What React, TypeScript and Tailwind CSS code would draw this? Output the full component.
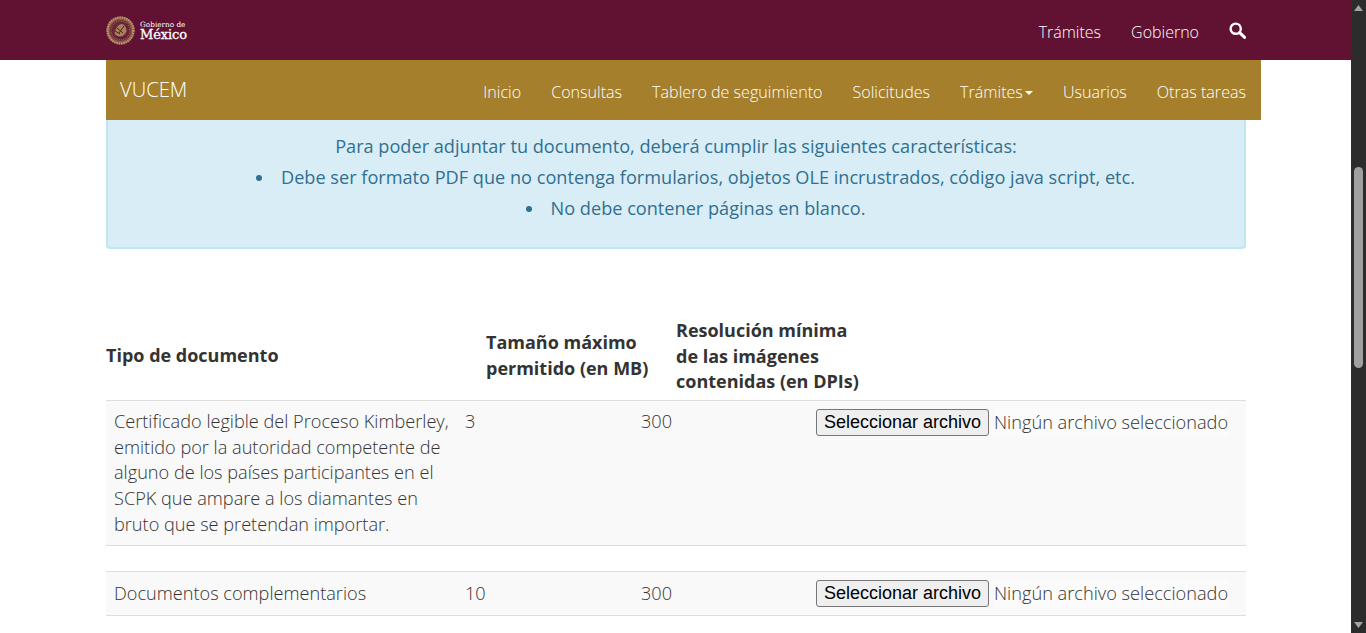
const F = () => (
  <div className="flex items-center self-start min-w-0">
    <button className="w-[173px] h-[27px] shrink-0 bg-[#efefef] border border-[#767676] rounded-[3px] text-[18px] leading-[25px] text-black font-['Liberation_Sans',sans-serif]">Seleccionar archivo</button>
    <span className="ml-[5px] text-[18.2px] leading-[27px] font-light text-[#333] bg-[#fbfbfb] whitespace-nowrap">Ningún archivo seleccionado</span>
  </div>
);

function Logo() {
  return (
    <div className="flex items-center gap-[5px]">
      <svg width="29" height="29" viewBox="0 0 29 29">
        <circle cx="14.5" cy="14.5" r="14" fill="#8a5a48" />
        <circle cx="14.5" cy="14.5" r="13" fill="none" stroke="#c2986a" strokeWidth="2.2" strokeDasharray="1.4 0.9" />
        <circle cx="14.5" cy="14.5" r="10.6" fill="#6a2636" />
        <circle cx="14.5" cy="14.5" r="9.4" fill="none" stroke="#a9825c" strokeWidth="1" strokeDasharray="1 1.2" />
        <path d="M8.500 17c1-5 4-9 7.500-9 2.500.5 4.500 3.500 4.500 7.500-1.500 3-4 5-6.500 5-2.500 0-4.500-1-5.500-3.500z" fill="#a5825a" />
        <path d="M10 20c3 3 7 3 10 0M11 12l6 5M18 10l-5 7M9 15l5 3" stroke="#5d1a2e" strokeWidth="1" fill="none" />
      </svg>
      <div className="flex flex-col text-white font-['DejaVu_Serif',serif] font-normal">
        <span className="text-[7.3px] leading-[9px] mt-[1px] whitespace-nowrap">Gobierno de</span>
        <span className="text-[13px] leading-[12px] tracking-[-0.1px] [-webkit-text-stroke:0.3px_white]">México</span>
      </div>
    </div>
  );
}

const subnav = ["Inicio", "Consultas", "Tablero de seguimiento", "Solicitudes"];

const Bullet = ({ children }: { children: string }) => (
  <li className="flex items-center">
    <span className="w-[6px] h-[6px] mr-[19px] rounded-full bg-[#31708f] shrink-0" />
    {children}
  </li>
);

export default function App() {
  return (
    <div className="h-[633px] overflow-hidden flex bg-white font-['Open_Sans',sans-serif] font-light text-[18.15px] text-[#333]">
      <div className="flex-1 min-w-0 flex flex-col">
        <header className="h-[60px] bg-[#611232] pl-[106px] pr-[105px] flex items-center justify-between shrink-0">
          <Logo />
          <nav className="flex items-center gap-[30px] text-[16px] text-white font-light">
            <span className="mt-[3px]">Trámites</span>
            <span className="mt-[3px]">Gobierno</span>
            <svg width="17" height="17" viewBox="0 0 17 17" fill="none">
              <circle cx="6.7" cy="6.7" r="5.1" stroke="white" strokeWidth="2.4" />
              <path d="M10.6 10.6L15.6 15.4" stroke="white" strokeWidth="3" strokeLinecap="round" />
            </svg>
          </nav>
        </header>
        <div className="mx-[106px] w-[1155px] shrink-0">
          <div className="h-[60px] bg-[#a57f2c] flex items-center justify-between pl-[14px] pr-[15px] text-white">
            <span className="-mt-[2px] text-[20.2px]">VUCEM</span>
            <nav className="flex items-center gap-[30px] text-[16.1px] font-light mt-[4px] whitespace-nowrap">
              {subnav.map(s => <span key={s}>{s}</span>)}
              <span className="flex items-center">Trámites<span className="ml-[2px] mt-[3px] w-0 h-0 border-x-[4px] border-x-transparent border-t-[4px] border-t-white" /></span>
              <span>Usuarios</span>
              <span>Otras tareas</span>
            </nav>
          </div>
          <div className="w-[1140px] h-[129px] pt-[11px] bg-[#d9edf7] border-x-2 border-b-2 border-[#bce8f1] rounded-b-[4px] text-[#31708f] font-normal text-[18.15px] leading-[31px] text-center">
            <p>Para poder adjuntar tu documento, deberá cumplir las siguientes características:</p>
            <ul className="pl-[39px] flex flex-col items-center">
              <Bullet>Debe ser formato PDF que no contenga formularios, objetos OLE incrustrados, código java script, etc.</Bullet>
              <Bullet>No debe contener páginas en blanco.</Bullet>
            </ul>
          </div>
          <div className="w-[1140px] mt-[69px]">
            <div className="grid grid-cols-[380px_190px_1fr] items-end h-[82px] pb-[5px] font-bold text-[18px] leading-[25.7px]">
              <span className="self-center -mt-[1px]">Tipo de documento</span>
              <span className="self-center -mt-[1px]">Tamaño máximo<br />permitido (en MB)</span>
              <span>Resolución mínima<br />de las imágenes<br />contenidas (en DPIs)</span>
            </div>
            <div className="grid grid-cols-[359px_176px_175px_1fr] h-[146px] border-y border-[#ddd] bg-[#f9f9f9] pt-[8px] leading-[25.7px]">
              <span className="pl-[8px]">Certificado legible del Proceso Kimberley, emitido por la autoridad competente de alguno de los países participantes en el SCPK que ampare a los diamantes en bruto que se pretendan importar.</span>
              <span>3</span>
              <span>300</span>
              <F />
            </div>
            <div className="h-[25px]" />
            <div className="grid grid-cols-[359px_176px_175px_1fr] h-[45px] border-y border-[#ddd] bg-[#f9f9f9] pt-[8px] leading-[27px]">
              <span className="pl-[8px]">Documentos complementarios</span>
              <span>10</span>
              <span>300</span>
              <F />
            </div>
          </div>
        </div>
      </div>
      <div className="w-[15px] shrink-0 bg-[#2c2c2c] flex flex-col items-center">
        <svg width="9" height="6" viewBox="0 0 9 6" className="mt-[5px] shrink-0"><path d="M4.500 0L9 6H0z" fill="#a3a3a3" /></svg>
        <div className="mt-[156px] w-[9px] h-[201px] shrink-0 rounded-full bg-[#a0a0a0]" />
        <svg width="9" height="6" viewBox="0 0 9 6" className="mt-auto mb-[5px] shrink-0"><path d="M4.500 6L9 0H0z" fill="#a3a3a3" /></svg>
      </div>
    </div>
  );
}
